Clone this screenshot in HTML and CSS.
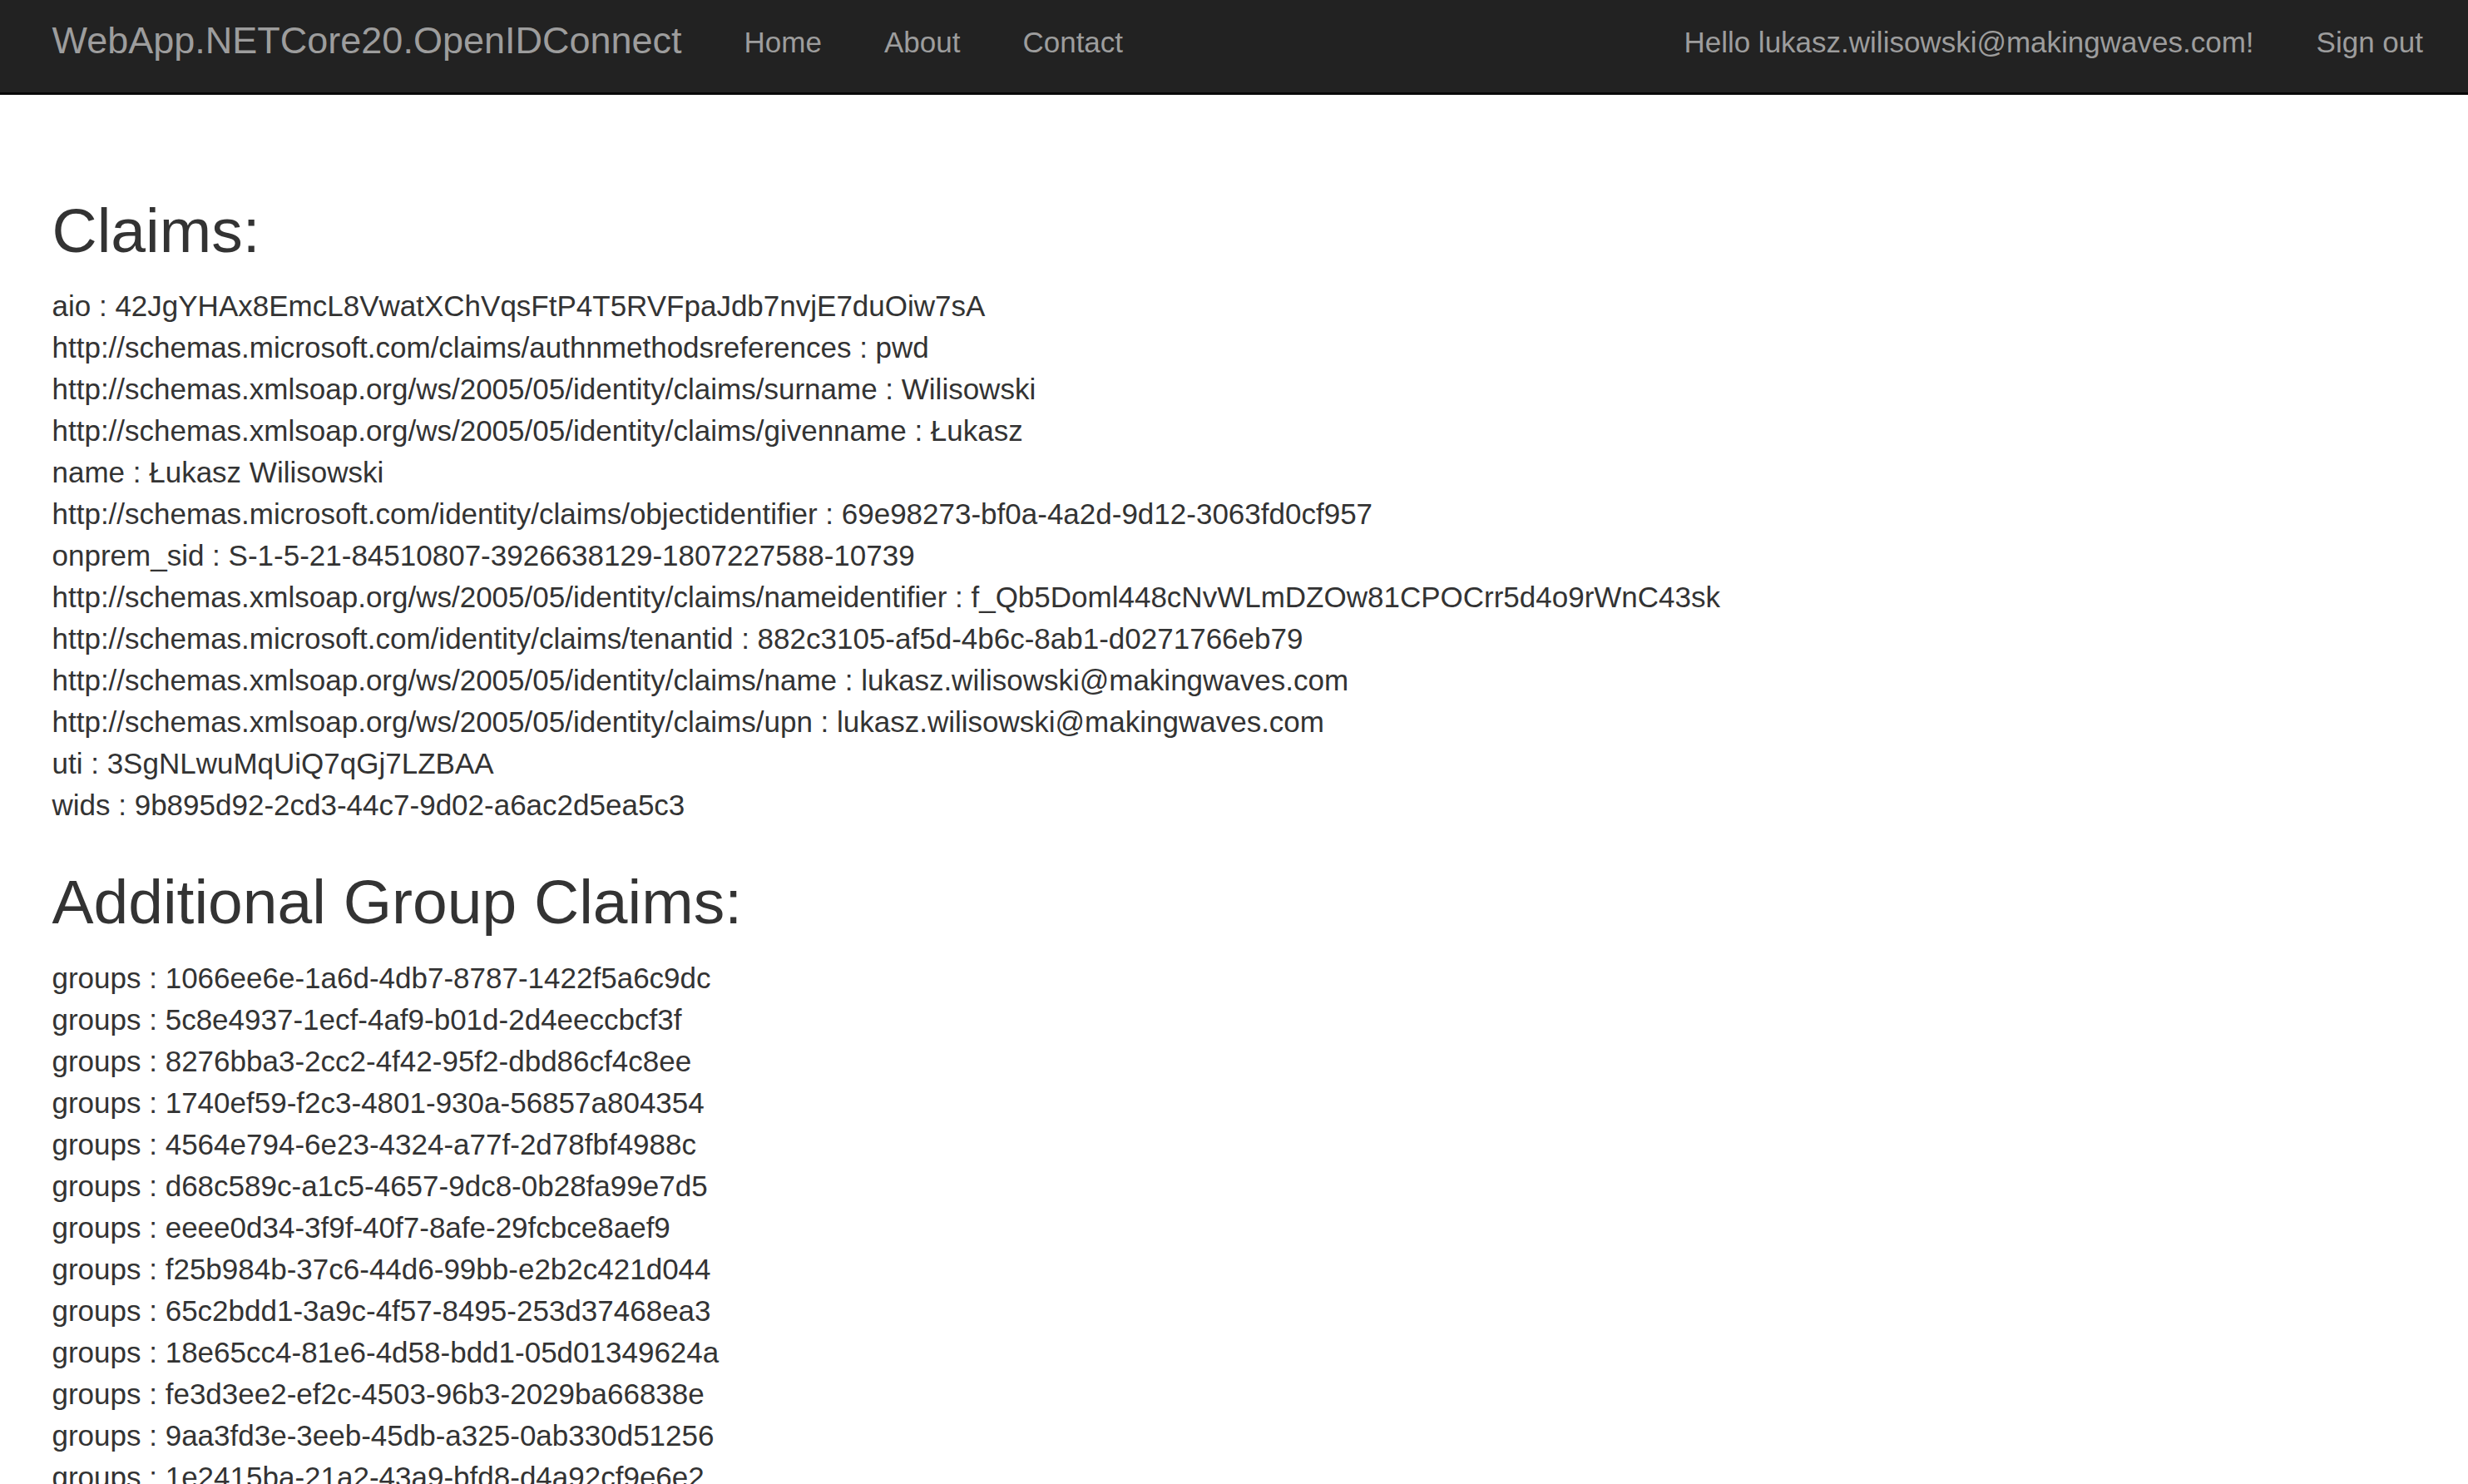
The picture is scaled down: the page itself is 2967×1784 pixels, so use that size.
FILE: index.html
```html
<!DOCTYPE html>
<html lang="en">
<head>
<meta charset="utf-8">
<title>WebApp.NETCore20.OpenIDConnect</title>
<link rel="stylesheet" href="styles.css">
</head>
<body>
<nav class="navbar">
  <a class="brand" href="#">WebApp.NETCore20.OpenIDConnect</a>
  <ul class="nav">
    <li><a href="#">Home</a></li>
    <li><a href="#">About</a></li>
    <li><a href="#">Contact</a></li>
  </ul>
  <ul class="nav nav-right">
    <li><span class="nav-text">Hello lukasz.wilisowski@makingwaves.com!</span></li>
    <li><a href="#">Sign out</a></li>
  </ul>
</nav>
<main class="content">
  <h2 class="section-title">Claims:</h2>
  <ul class="claims">
    <li>aio : 42JgYHAx8EmcL8VwatXChVqsFtP4T5RVFpaJdb7nvjE7duOiw7sA</li>
    <li>http://schemas.microsoft.com/claims/authnmethodsreferences : pwd</li>
    <li>http://schemas.xmlsoap.org/ws/2005/05/identity/claims/surname : Wilisowski</li>
    <li>http://schemas.xmlsoap.org/ws/2005/05/identity/claims/givenname : Łukasz</li>
    <li>name : Łukasz Wilisowski</li>
    <li>http://schemas.microsoft.com/identity/claims/objectidentifier : 69e98273-bf0a-4a2d-9d12-3063fd0cf957</li>
    <li>onprem_sid : S-1-5-21-84510807-3926638129-1807227588-10739</li>
    <li>http://schemas.xmlsoap.org/ws/2005/05/identity/claims/nameidentifier : f_Qb5Doml448cNvWLmDZOw81CPOCrr5d4o9rWnC43sk</li>
    <li>http://schemas.microsoft.com/identity/claims/tenantid : 882c3105-af5d-4b6c-8ab1-d0271766eb79</li>
    <li>http://schemas.xmlsoap.org/ws/2005/05/identity/claims/name : lukasz.wilisowski@makingwaves.com</li>
    <li>http://schemas.xmlsoap.org/ws/2005/05/identity/claims/upn : lukasz.wilisowski@makingwaves.com</li>
    <li>uti : 3SgNLwuMqUiQ7qGj7LZBAA</li>
    <li>wids : 9b895d92-2cd3-44c7-9d02-a6ac2d5ea5c3</li>
  </ul>
  <h2 class="section-title spaced">Additional Group Claims:</h2>
  <ul class="claims">
    <li>groups : 1066ee6e-1a6d-4db7-8787-1422f5a6c9dc</li>
    <li>groups : 5c8e4937-1ecf-4af9-b01d-2d4eeccbcf3f</li>
    <li>groups : 8276bba3-2cc2-4f42-95f2-dbd86cf4c8ee</li>
    <li>groups : 1740ef59-f2c3-4801-930a-56857a804354</li>
    <li>groups : 4564e794-6e23-4324-a77f-2d78fbf4988c</li>
    <li>groups : d68c589c-a1c5-4657-9dc8-0b28fa99e7d5</li>
    <li>groups : eeee0d34-3f9f-40f7-8afe-29fcbce8aef9</li>
    <li>groups : f25b984b-37c6-44d6-99bb-e2b2c421d044</li>
    <li>groups : 65c2bdd1-3a9c-4f57-8495-253d37468ea3</li>
    <li>groups : 18e65cc4-81e6-4d58-bdd1-05d01349624a</li>
    <li>groups : fe3d3ee2-ef2c-4503-96b3-2029ba66838e</li>
    <li>groups : 9aa3fd3e-3eeb-45db-a325-0ab330d51256</li>
    <li>groups : 1e2415ba-21a2-43a9-bfd8-d4a92cf9e6e2</li>
  </ul>
</main>
</body>
</html>
```
FILE: styles.css
```css
html, body {
  margin: 0;
  padding: 0;
  background: #ffffff;
}

body {
  font-family: "Liberation Sans", Arial, sans-serif;
  font-size: 35px;
  line-height: 50px;
  color: #333333;
}

a {
  text-decoration: none;
}

.navbar {
  display: flex;
  align-items: flex-start;
  height: 111px;
  padding: 0 16.5px 0 25px;
  background: #222222;
  border-bottom: 3px solid #080808;
}

.brand {
  display: block;
  padding: 24.4px 37.5px 0;
  font-size: 45px;
  line-height: 50px;
  color: #9d9d9d;
  white-space: nowrap;
}

.nav {
  display: flex;
  margin: 0;
  padding: 0;
  list-style: none;
}

.nav-right {
  margin-left: auto;
}

.nav a,
.nav .nav-text {
  display: block;
  padding: 25.9px 37.5px 0;
  line-height: 50px;
  color: #9d9d9d;
  white-space: nowrap;
}

.content {
  padding: 121.5px 62.5px 0;
}

.section-title {
  margin: 0 0 25px;
  font-size: 75px;
  font-weight: 500;
  line-height: 82.5px;
  color: #333333;
}

.section-title.spaced {
  margin-top: 50px;
}

.claims {
  margin: 0;
  padding: 0;
  list-style: none;
  white-space: nowrap;
}
```
